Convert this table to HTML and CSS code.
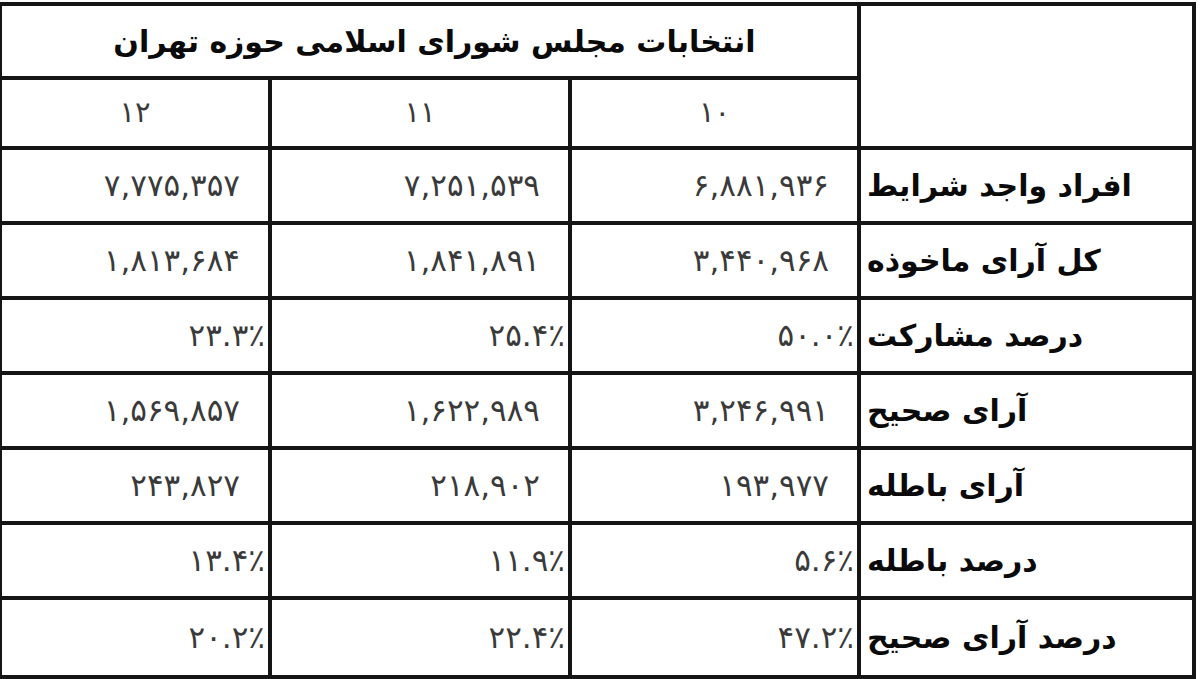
FILE: index.html
```html
<!DOCTYPE html>
<html lang="fa" dir="rtl">
<head>
<meta charset="utf-8">
<link rel="stylesheet" href="styles.css">
<title>انتخابات مجلس شورای اسلامی حوزه تهران</title>
</head>
<body>
<table class="results">
  <colgroup>
    <col class="c-label">
    <col class="c-10">
    <col class="c-11">
    <col class="c-12">
  </colgroup>
  <thead>
    <tr class="row-title">
      <th class="corner" rowspan="2"></th>
      <th class="title" colspan="3">انتخابات مجلس شورای اسلامی حوزه تهران</th>
    </tr>
    <tr class="row-years">
      <th class="year">۱۰</th>
      <th class="year">۱۱</th>
      <th class="year">۱۲</th>
    </tr>
  </thead>
  <tbody>
    <tr>
      <th class="label">افراد واجد شرایط</th>
      <td class="num">۶,۸۸۱,۹۳۶</td>
      <td class="num">۷,۲۵۱,۵۳۹</td>
      <td class="num">۷,۷۷۵,۳۵۷</td>
    </tr>
    <tr>
      <th class="label">کل آرای ماخوذه</th>
      <td class="num">۳,۴۴۰,۹۶۸</td>
      <td class="num">۱,۸۴۱,۸۹۱</td>
      <td class="num">۱,۸۱۳,۶۸۴</td>
    </tr>
    <tr>
      <th class="label">درصد مشارکت</th>
      <td class="pct">۵۰.۰٪</td>
      <td class="pct">۲۵.۴٪</td>
      <td class="pct">۲۳.۳٪</td>
    </tr>
    <tr>
      <th class="label">آرای صحیح</th>
      <td class="num">۳,۲۴۶,۹۹۱</td>
      <td class="num">۱,۶۲۲,۹۸۹</td>
      <td class="num">۱,۵۶۹,۸۵۷</td>
    </tr>
    <tr>
      <th class="label">آرای باطله</th>
      <td class="num">۱۹۳,۹۷۷</td>
      <td class="num">۲۱۸,۹۰۲</td>
      <td class="num">۲۴۳,۸۲۷</td>
    </tr>
    <tr>
      <th class="label">درصد باطله</th>
      <td class="pct">۵.۶٪</td>
      <td class="pct">۱۱.۹٪</td>
      <td class="pct">۱۳.۴٪</td>
    </tr>
    <tr class="row-last">
      <th class="label">درصد آرای صحیح</th>
      <td class="pct">۴۷.۲٪</td>
      <td class="pct">۲۲.۴٪</td>
      <td class="pct">۲۰.۲٪</td>
    </tr>
  </tbody>
</table>
</body>
</html>
```

FILE: styles.css
```css
html, body {
  margin: 0;
  padding: 0;
  background: #ffffff;
}

body {
  padding: 2px 4px 0 2px;
  font-family: "DejaVu Sans", "Noto Sans", sans-serif;
  color: #111;
}

.results {
  direction: rtl;
  border-collapse: collapse;
  width: 1194px;
  table-layout: fixed;
  border: 4px solid #111;
}

.c-label { width: 335px; }
.c-10 { width: 289px; }
.c-11 { width: 300px; }
.c-12 { width: 270px; }

.results th,
.results td {
  border: 4px solid #151515;
  padding: 0;
  vertical-align: middle;
  line-height: 1.1;
}

.row-title th {
  height: 70px;
}

.title {
  font-size: 30px;
  font-weight: bold;
  text-align: center;
  color: #0a0a0a;
  padding-left: 10px !important;
}

.row-years th {
  height: 66px;
}

.year {
  font-size: 29px;
  font-weight: normal;
  color: #3a3a3a;
  text-align: center;
}

tbody tr {
  height: 75px;
}

tbody tr.row-last {
  height: 79px;
}

.label {
  font-size: 30px;
  font-weight: bold;
  text-align: left;
  padding-left: 6px !important;
  color: #0a0a0a;
  white-space: nowrap;
}

.num {
  font-size: 31px;
  color: #3a3a3a;
  text-align: right;
  padding-right: 28px !important;
}

.pct {
  font-size: 31px;
  color: #3a3a3a;
  text-align: right;
  direction: ltr;
  unicode-bidi: plaintext;
  padding-right: 3px !important;
}
```
